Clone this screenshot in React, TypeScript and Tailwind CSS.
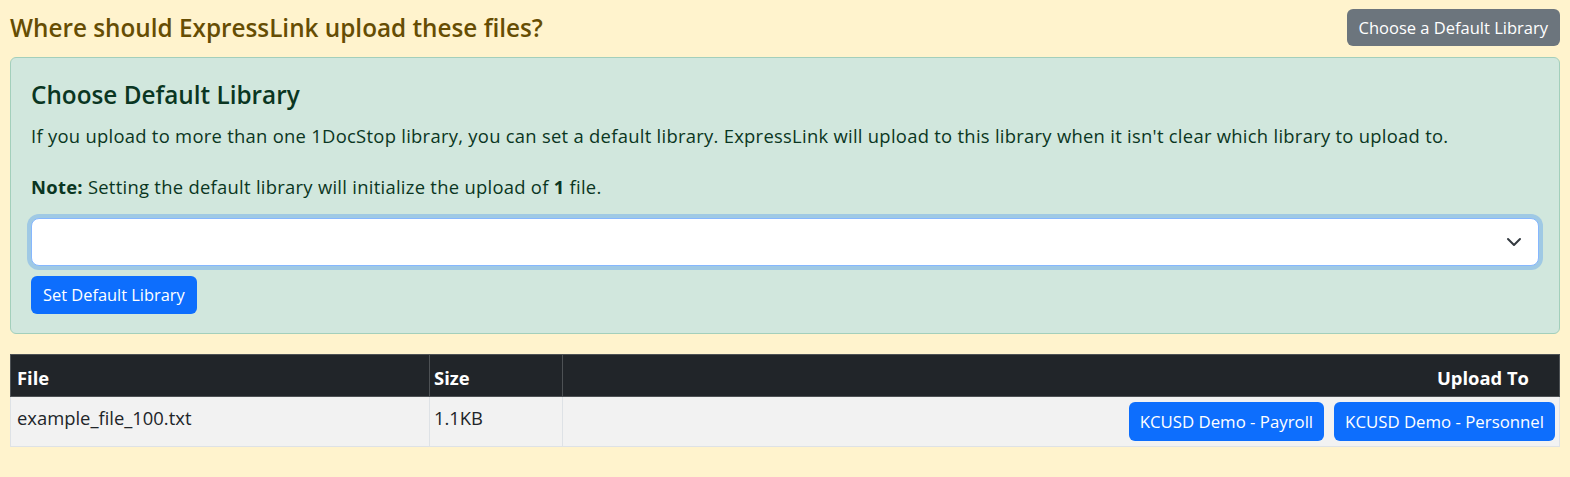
import React from 'react';

const font = "font-['Segoe_UI','Open_Sans',sans-serif]";

const App: React.FC = () => {
  return (
    <div className={`min-h-screen bg-[#fff3cd] px-[10px] pt-[9px] text-[18.4px] text-[#212529] ${font}`}>
      {/* Header */}
      <div className="flex items-center justify-between">
        <h4 className="text-[24.3px] leading-[1.2] font-semibold text-[#664d03]">Where should ExpressLink upload these files?</h4>
        <button className="h-[37px] px-[12px] rounded-[6px] bg-[#6c757d] text-white text-[16.5px] leading-[24px]">
          Choose a Default Library
        </button>
      </div>

      {/* Default library box */}
      <div className="mt-[11px] rounded-[6px] border border-[#a3cfbb] bg-[#d1e7dd] px-[20px] pt-[22px] pb-[19px] text-[#0a3622]">
        <h4 className="text-[24.3px] leading-[29px] font-semibold mb-[13px]">Choose Default Library</h4>
        <p className="leading-[28px] mb-[23px] tracking-[0.28px]">
          If you upload to more than one 1DocStop library, you can set a default library. ExpressLink will upload to this library when it isn't clear which library to upload to.
        </p>
        <p className="leading-[28px] mb-[17px] tracking-[0.28px]">
          <b className="font-bold">Note:</b> Setting the default library will initialize the upload of <b className="font-bold">1</b> file.
        </p>
        <div className="relative h-[48px] rounded-[8px] border border-[#86b7fe] bg-white shadow-[0_0_0_4px_rgba(13,110,253,0.25)]">
          <svg className="absolute right-[16px] top-1/2 -translate-y-1/2" width="16" height="12" viewBox="0 2 16 12">
            <path d="m2 5 6 6 6-6" fill="none" stroke="#343a40" strokeWidth="2" strokeLinecap="round" strokeLinejoin="round" />
          </svg>
        </div>
        <button className="mt-[10px] h-[38px] px-[12px] rounded-[6px] bg-[#0d6efd] text-white text-[16.4px] leading-[24px]">
          Set Default Library
        </button>
      </div>

      {/* Files table */}
      <table className="mt-[20px] w-full border-collapse">
        <thead>
          <tr className="bg-[#212529] text-white font-bold">
            <th className="w-[419px] border border-[#4d5154] px-[6px] pt-[10px] pb-[5px] text-left leading-[26px]">File</th>
            <th className="w-[133px] border border-[#4d5154] px-[4px] pt-[10px] pb-[5px] text-left leading-[26px]">Size</th>
            <th className="border border-[#4d5154] pl-[8px] pr-[30px] pt-[10px] pb-[5px] text-right leading-[26px]">Upload To</th>
          </tr>
        </thead>
        <tbody>
          <tr className="bg-[#f2f2f2]">
            <td className="border border-[#dee2e6] px-[6px] pt-[7px] pb-[10px] align-top leading-[28px]">example_file_100.txt</td>
            <td className="border border-[#dee2e6] px-[4px] pt-[7px] pb-[10px] align-top leading-[28px]">1.1KB</td>
            <td className="border border-[#dee2e6] pl-[8px] pr-[4px] pt-[5px] pb-[5px]">
              <div className="flex justify-end gap-[10px]">
                <button className="h-[39px] px-[11px] rounded-[6px] bg-[#0d6efd] text-white text-[16.8px] leading-[24px]">KCUSD Demo - Payroll</button>
                <button className="h-[39px] px-[11px] rounded-[6px] bg-[#0d6efd] text-white text-[16.8px] leading-[24px]">KCUSD Demo - Personnel</button>
              </div>
            </td>
          </tr>
        </tbody>
      </table>
    </div>
  );
};

export default App;
